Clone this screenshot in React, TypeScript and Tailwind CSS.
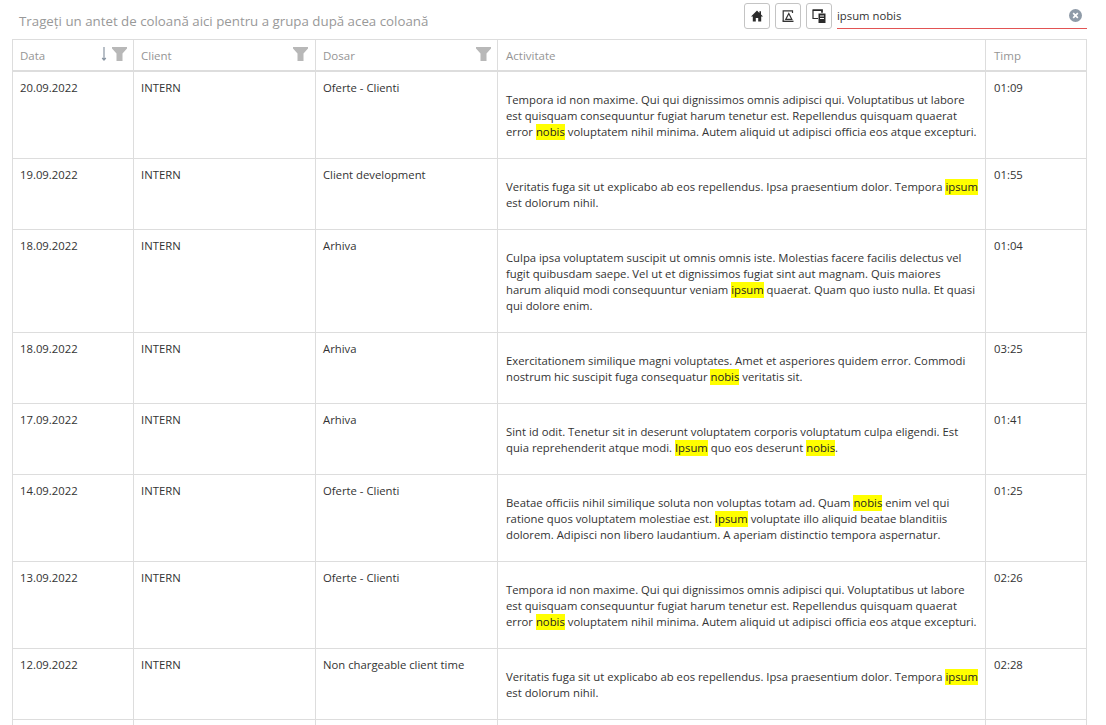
const rows: { date: string; dosar: string; time: string; h: string; lines: string[] }[] = [
  {
    date: "20.09.2022", dosar: "Oferte - Clienti", time: "01:09", h: "h-[87px]",
    lines: [
      "Tempora id non maxime. Qui qui dignissimos omnis adipisci qui. Voluptatibus ut labore",
      "est quisquam consequuntur fugiat harum tenetur est. Repellendus quisquam quaerat",
      "error [nobis] voluptatem nihil minima. Autem aliquid ut adipisci officia eos atque excepturi.",
    ],
  },
  {
    date: "19.09.2022", dosar: "Client development", time: "01:55", h: "h-[71px]",
    lines: [
      "Veritatis fuga sit ut explicabo ab eos repellendus. Ipsa praesentium dolor. Tempora [ipsum]",
      "est dolorum nihil.",
    ],
  },
  {
    date: "18.09.2022", dosar: "Arhiva", time: "01:04", h: "h-[103px]",
    lines: [
      "Culpa ipsa voluptatem suscipit ut omnis omnis iste. Molestias facere facilis delectus vel",
      "fugit quibusdam saepe. Vel ut et dignissimos fugiat sint aut magnam. Quis maiores",
      "harum aliquid modi consequuntur veniam [ipsum] quaerat. Quam quo iusto nulla. Et quasi",
      "qui dolore enim.",
    ],
  },
  {
    date: "18.09.2022", dosar: "Arhiva", time: "03:25", h: "h-[71px]",
    lines: [
      "Exercitationem similique magni voluptates. Amet et asperiores quidem error. Commodi",
      "nostrum hic suscipit fuga consequatur [nobis] veritatis sit.",
    ],
  },
  {
    date: "17.09.2022", dosar: "Arhiva", time: "01:41", h: "h-[71px]",
    lines: [
      "Sint id odit. Tenetur sit in deserunt voluptatem corporis voluptatum culpa eligendi. Est",
      "quia reprehenderit atque modi. [Ipsum] quo eos deserunt [nobis].",
    ],
  },
  {
    date: "14.09.2022", dosar: "Oferte - Clienti", time: "01:25", h: "h-[87px]",
    lines: [
      "Beatae officiis nihil similique soluta non voluptas totam ad. Quam [nobis] enim vel qui",
      "ratione quos voluptatem molestiae est. [Ipsum] voluptate illo aliquid beatae blanditiis",
      "dolorem. Adipisci non libero laudantium. A aperiam distinctio tempora aspernatur.",
    ],
  },
  {
    date: "13.09.2022", dosar: "Oferte - Clienti", time: "02:26", h: "h-[87px]",
    lines: [
      "Tempora id non maxime. Qui qui dignissimos omnis adipisci qui. Voluptatibus ut labore",
      "est quisquam consequuntur fugiat harum tenetur est. Repellendus quisquam quaerat",
      "error [nobis] voluptatem nihil minima. Autem aliquid ut adipisci officia eos atque excepturi.",
    ],
  },
  {
    date: "12.09.2022", dosar: "Non chargeable client time", time: "02:28", h: "h-[71px]",
    lines: [
      "Veritatis fuga sit ut explicabo ab eos repellendus. Ipsa praesentium dolor. Tempora [ipsum]",
      "est dolorum nihil.",
    ],
  },
]

// [word] marks a search hit
function Highlighted({ line }: { line: string }) {
  const parts = line.split(/\[|\]/)
  return (
    <div className="whitespace-nowrap">
      {parts.map((part, i) =>
        i % 2 === 1 ? (
          <span key={i} className="inline-block bg-[#ffff00] text-[#222]">
            {part}
          </span>
        ) : (
          <span key={i}>{part}</span>
        )
      )}
    </div>
  )
}

function Funnel({ className }: { className: string }) {
  return (
    <svg viewBox="0 0 15 14" className={className} fill="#b8b8b8">
      <path d="M0 0h15v1.500L10.500 6.500V14h-6V6.500L0 1.500z" />
    </svg>
  )
}

function ToolButton({ children }: { children: React.ReactNode }) {
  return (
    <button className="flex h-[26px] w-[26px] items-center justify-center rounded-[3px] border border-[#c4c4c4] bg-white">
      {children}
    </button>
  )
}

const colClasses = {
  data: "w-[121px] shrink-0 border-r border-[#ddd]",
  client: "w-[182px] shrink-0 border-r border-[#ddd]",
  dosar: "w-[182px] shrink-0 border-r border-[#ddd]",
  activitate: "w-[488px] shrink-0 border-r border-[#ddd]",
  timp: "flex-1",
}

export default function App() {
  return (
    <div className="h-[725px] w-[1106px] overflow-hidden bg-white font-['Open_Sans','Liberation_Sans',sans-serif] text-[11.3px] leading-[16px] text-[#333]">
      <div className="flex h-[39px] items-start justify-between pl-[19px] pr-[19px]">
        <div className="pt-[12px] text-[13.3px] leading-[18px] text-[#999]">
          Trageți un antet de coloană aici pentru a grupa după acea coloană
        </div>
        <div className="flex items-start pt-[3px]">
          <div className="flex gap-[5px]">
            <ToolButton>
              <svg viewBox="0 0 12 12" className="h-[12px] w-[12px]" fill="#2b2b2b">
                <path d="M6 .5 0 6.500h1.800V11.500h3V8h2.400v3.500h3V6.500H12L10 4.500V1.200H8.400v1.700z" />
              </svg>
            </ToolButton>
            <ToolButton>
              <svg viewBox="0 0 12 12" className="h-[12px] w-[12px]" fill="none" stroke="#333" strokeWidth="1.200">
                <path d="M1.200 11V.8h9.300V3" />
                <path d="M.5 11.300h11" strokeWidth="1.400" />
                <path d="M3.800 9.300 6.800 3.500l3 5.800z" />
              </svg>
            </ToolButton>
            <ToolButton>
              <svg viewBox="0 0 14 14" className="h-[14px] w-[14px]">
                <path d="M.5 1.200h9.500v2.500" fill="none" stroke="#2b2b2b" strokeWidth="1.800" />
                <path d="M1 1.500v8h5" fill="none" stroke="#2b2b2b" strokeWidth="1.200" />
                <path d="M6.500 4.500h7V14h-7z" fill="#2b2b2b" />
                <path d="M8 6.500h4v1H8zM8 9h4v1H8z" fill="#fff" />
              </svg>
            </ToolButton>
          </div>
          <div className="relative ml-[5px] h-[26px] w-[250px] border-b border-[#e25454]">
            <div className="pt-[5px] leading-[16px] text-[#333]">ipsum nobis</div>
            <svg viewBox="0 0 14 14" className="absolute right-[5px] top-[6px] h-[13px] w-[13px]">
              <circle cx="7" cy="7" r="7" fill="#8f9ba8" />
              <path d="M4.500 4.500l5 5M9.500 4.500l-5 5" stroke="#fff" strokeWidth="1.800" />
            </svg>
          </div>
        </div>
      </div>

      <div className="ml-[12px] w-[1075px] border-l border-r border-t border-[#ddd]">
        <div className="flex h-[32px] border-b-2 border-[#ddd] text-[11.5px] text-[#959595]">
          <div className={`${colClasses.data} relative pl-[7px] pt-[8px]`}>
            Data
            <svg viewBox="0 0 6 14" className="absolute left-[88px] top-[7px] h-[14px] w-[6px]" fill="none" stroke="#8a96a3" strokeWidth="1.200">
              <path d="M3 0v13M1.200 11 3 13l1.800-2" />
            </svg>
            <Funnel className="absolute right-[6px] top-[7px] h-[14px] w-[15px]" />
          </div>
          <div className={`${colClasses.client} relative pl-[7px] pt-[8px]`}>
            Client
            <Funnel className="absolute right-[7px] top-[7px] h-[14px] w-[15px]" />
          </div>
          <div className={`${colClasses.dosar} relative pl-[7px] pt-[8px]`}>
            Dosar
            <Funnel className="absolute right-[6px] top-[7px] h-[14px] w-[15px]" />
          </div>
          <div className={`${colClasses.activitate} pl-[8px] pt-[8px]`}>Activitate</div>
          <div className={`${colClasses.timp} pl-[8px] pt-[8px]`}>Timp</div>
        </div>

        {rows.map((row, i) => (
          <div key={i} className={`flex ${row.h} border-b border-[#ddd]`}>
            <div className={`${colClasses.data} pl-[7px] pt-[8px]`}>{row.date}</div>
            <div className={`${colClasses.client} pl-[7px] pt-[8px]`}>INTERN</div>
            <div className={`${colClasses.dosar} pl-[7px] pt-[8px]`}>{row.dosar}</div>
            <div className={`${colClasses.activitate} pl-[8px] pt-[20px]`}>
              {row.lines.map((line, j) => (
                <Highlighted key={j} line={line} />
              ))}
            </div>
            <div className={`${colClasses.timp} pl-[8px] pt-[8px]`}>{row.time}</div>
          </div>
        ))}

        <div className="flex h-[40px]">
          <div className={colClasses.data} />
          <div className={colClasses.client} />
          <div className={colClasses.dosar} />
          <div className={colClasses.activitate} />
          <div className={colClasses.timp} />
        </div>
      </div>
    </div>
  )
}
